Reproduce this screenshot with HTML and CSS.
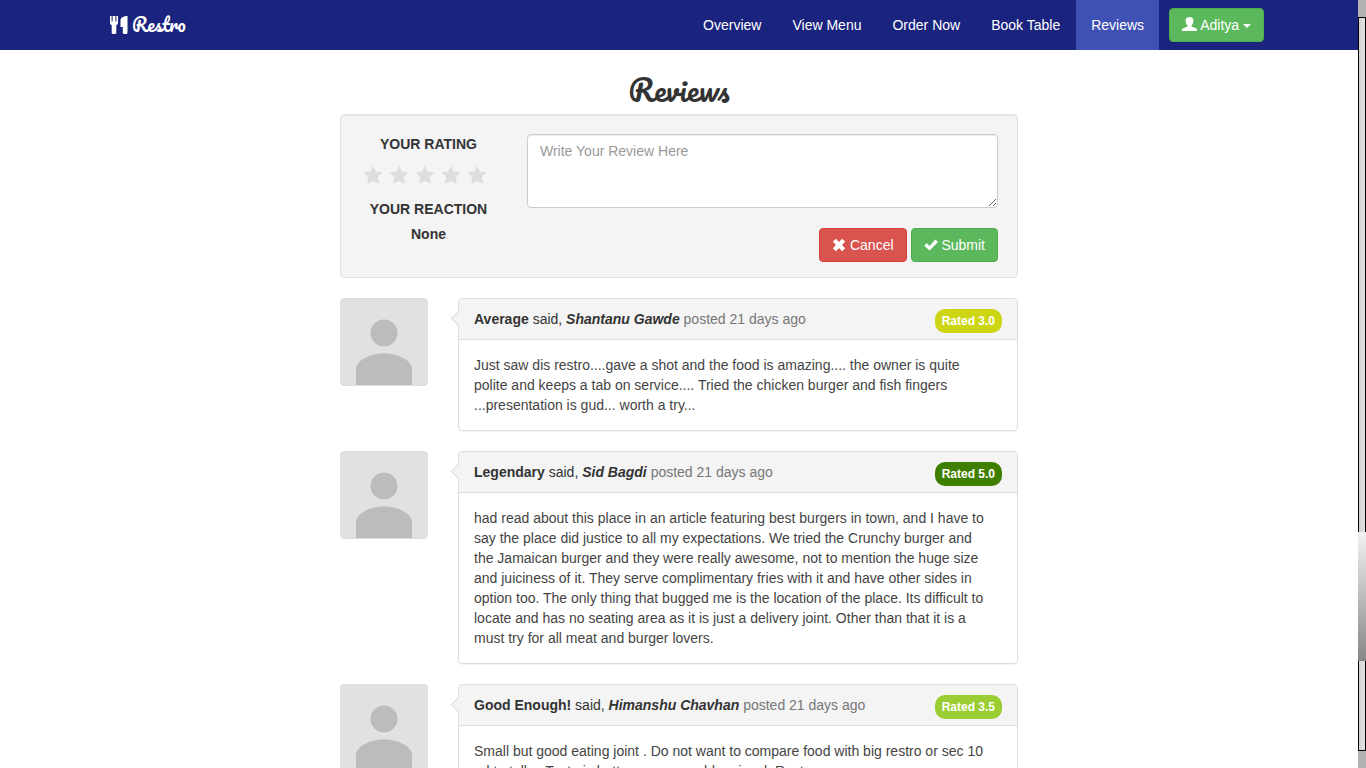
FILE: index.html
```html
<!DOCTYPE html>
<html lang="en">
<head>
<meta charset="utf-8">
<meta name="viewport" content="width=device-width, initial-scale=1">
<title>Restro - Reviews</title>
<link rel="stylesheet" href="styles.css">
</head>
<body>
<svg class="sprite" aria-hidden="true">
  <symbol id="star" viewBox="0 0 20 20"><path stroke="#ddd" stroke-width="1.200" stroke-linejoin="round" d="M10 2l2.500 5.100 5.700.8-4.200 4 1.200 5.900L10 15.200l-5.200 2.600L6 11.900l-4.200-4 5.700-.8z"/></symbol>
  <symbol id="person" viewBox="0 0 86 86"><circle cx="43" cy="34" r="13.500"/><path d="M15 86V70c0-8 13-15.500 28-15.500S71 62 71 70v16z"/></symbol>
</svg>
<div class="page">
  <header class="navbar">
    <div class="navbar-inner">
      <a class="brand" href="#">
        <svg class="brand-icon" viewBox="0 0 18 18" aria-hidden="true"><path d="M0 0h1.600v5.500h1V0H5.400v5.500h1V0H8v7c0 1.200-.8 1.800-1.700 2.200V17c0 1.300-4.600 1.300-4.600 0V9.200C.8 8.800 0 8.200 0 7zM17.500 0v17c0 1.300-4.700 1.300-4.700 0v-6h-2.300V4c0-2.400 3.500-4 7-4z"/></svg>
        <span class="script">Restro</span>
      </a>
      <nav class="nav">
        <a href="#">Overview</a>
        <a href="#">View Menu</a>
        <a href="#">Order Now</a>
        <a href="#">Book Table</a>
        <a href="#" class="active">Reviews</a>
        <button type="button" class="btn btn-success user">
          <svg class="icon" viewBox="0 0 15 14" aria-hidden="true"><path d="M7.500 0c2.400 0 3.900 1.300 3.900 3.600 0 1.900-.7 3.800-1.900 4.900v1.100l4.500 1.600c.6.300 1 .7 1 1.300V14H0v-1.500c0-.6.400-1 1-1.300l4.500-1.600V8.500C4.300 7.400 3.600 5.500 3.600 3.600 3.600 1.300 5.100 0 7.500 0z"/></svg>
          Aditya <span class="caret"></span>
        </button>
      </nav>
    </div>
  </header>
  <main class="content">
    <h1 class="script">Reviews</h1>
    <form class="well">
      <div class="rating">
        <strong>YOUR RATING</strong>
        <div class="stars">
          <button type="button" aria-label="1 star"><svg><use href="#star"/></svg></button>
          <button type="button" aria-label="2 stars"><svg><use href="#star"/></svg></button>
          <button type="button" aria-label="3 stars"><svg><use href="#star"/></svg></button>
          <button type="button" aria-label="4 stars"><svg><use href="#star"/></svg></button>
          <button type="button" aria-label="5 stars"><svg><use href="#star"/></svg></button>
        </div>
        <strong>YOUR REACTION</strong>
        <strong class="reaction">None</strong>
      </div>
      <div class="compose">
        <textarea aria-label="Review" placeholder="Write Your Review Here"></textarea>
        <div class="actions">
          <button type="button" class="btn btn-danger">
            <svg class="icon" viewBox="0 0 14 14" aria-hidden="true"><path d="M3.800.8L7 4l3.200-3.200 3 3L10 7l3.200 3.200-3 3L7 10l-3.200 3.200-3-3L4 7 .8 3.800z"/></svg>
            Cancel
          </button>
          <button type="submit" class="btn btn-success">
            <svg class="icon" viewBox="0 0 15 14" aria-hidden="true"><path d="M12.200 1.200L15 3.800 6 13 .2 7.900l2.600-2.700L6 8z"/></svg>
            Submit
          </button>
        </div>
      </div>
    </form>
    <article class="review">
      <svg class="avatar" viewBox="0 0 86 86" role="img" aria-label="User"><use href="#person"/></svg>
      <div class="panel">
        <div class="panel-heading">
          <p><strong>Average</strong> said, <strong><em>Shantanu Gawde</em></strong> <span class="muted">posted 21 days ago</span></p>
          <span class="label average">Rated 3.0</span>
        </div>
        <p class="panel-body">Just saw dis restro....gave a shot and the food is amazing.... the owner is quite<br>polite and keeps a tab on service.... Tried the chicken burger and fish fingers<br>...presentation is gud... worth a try...</p>
      </div>
    </article>
    <article class="review">
      <svg class="avatar" viewBox="0 0 86 86" role="img" aria-label="User"><use href="#person"/></svg>
      <div class="panel">
        <div class="panel-heading">
          <p><strong>Legendary</strong> said, <strong><em>Sid Bagdi</em></strong> <span class="muted">posted 21 days ago</span></p>
          <span class="label legendary">Rated 5.0</span>
        </div>
        <p class="panel-body">had read about this place in an article featuring best burgers in town, and I have to<br>say the place did justice to all my expectations. We tried the Crunchy burger and<br>the Jamaican burger and they were really awesome, not to mention the huge size<br>and juiciness of it. They serve complimentary fries with it and have other sides in<br>option too. The only thing that bugged me is the location of the place. Its difficult to<br>locate and has no seating area as it is just a delivery joint. Other than that it is a<br>must try for all meat and burger lovers.</p>
      </div>
    </article>
    <article class="review">
      <svg class="avatar" viewBox="0 0 86 86" role="img" aria-label="User"><use href="#person"/></svg>
      <div class="panel">
        <div class="panel-heading">
          <p><strong>Good Enough!</strong> said, <strong><em>Himanshu Chavhan</em></strong> <span class="muted">posted 21 days ago</span></p>
          <span class="label good">Rated 3.5</span>
        </div>
        <p class="panel-body">Small but good eating joint . Do not want to compare food with big restro or sec 10<br>ad to talks. Taste is better, name would varies. k Rest</p>
      </div>
    </article>
  </main>
</div>
<div class="scrollbar" aria-hidden="true"><div class="track"><div class="thumb"></div></div></div>
</body>
</html>
```

FILE: styles.css
```css
* { box-sizing: border-box; }
body {
  margin: 0;
  height: 100vh;
  display: flex;
  overflow: hidden;
  background: #fff;
  color: #333;
  font: 14px/20px "Liberation Sans", Arial, sans-serif;
}
p, h1 { margin: 0; }
.sprite { position: absolute; width: 0; height: 0; }
.page { flex: 1; min-width: 0; overflow: hidden; }
.script { font-family: Pacifico, cursive; font-weight: 400; }

.navbar { background: #1a237e; }
.navbar-inner {
  max-width: 1170px;
  height: 50px;
  margin: 0 auto;
  padding: 0 0 0 16px;
  display: flex;
  justify-content: space-between;
}
.brand {
  display: flex;
  align-items: center;
  gap: 4px;
  color: #fff;
  text-decoration: none;
  font-size: 18px;
}
.brand-icon { width: 18px; height: 18px; fill: #fff; }
.nav { display: flex; align-items: center; gap: 1px; }
.nav a {
  padding: 15px;
  color: #fff;
  text-decoration: none;
}
.nav .active { background: #3f51b5; }
.user { margin-left: 9px; }

.btn {
  height: 34px;
  padding: 0 12px;
  border: 1px solid;
  border-radius: 4px;
  color: #fff;
  font: inherit;
  white-space: nowrap;
}
.btn-success { background: #5cb85c; border-color: #4cae4c; }
.btn-danger { background: #d9534f; border-color: #d43f3a; }
.icon { width: 14px; height: 14px; fill: #fff; vertical-align: -2px; }
.user .icon { width: 15px; vertical-align: -1px; }
.caret {
  display: inline-block;
  border: 4px solid transparent;
  border-top-color: #fff;
  border-bottom: 0;
  vertical-align: middle;
}

.content { max-width: 710px; margin: 0 auto; padding: 20px 16px; }
h1 { font-size: 30px; line-height: 40px; text-align: center; margin-bottom: 4px; }
.well {
  display: flex;
  gap: 30px;
  padding: 19px;
  margin-bottom: 20px;
  background: #f4f4f4;
  border: 1px solid #e3e3e3;
  border-radius: 4px;
  box-shadow: inset 0 1px 1px rgba(0, 0, 0, .05);
}
.rating {
  width: 137px;
  display: flex;
  flex-direction: column;
  align-items: center;
}
.stars { display: flex; gap: 6px; margin: 11px 0 14px; padding-right: 8px; }
.stars button { padding: 0; border: 0; background: none; height: 20px; }
.stars svg { display: block; width: 20px; height: 20px; fill: #ddd; }
.reaction { margin-top: 5px; }
.compose { flex: 1; min-width: 0; margin-bottom: -4px; }
textarea {
  display: block;
  width: 100%;
  height: 74px;
  padding: 6px 12px;
  border: 1px solid #ccc;
  border-radius: 4px;
  box-shadow: inset 0 1px 1px rgba(0, 0, 0, .075);
  color: #555;
  font: inherit;
}
textarea::placeholder { color: #999; }
.actions { display: flex; justify-content: flex-end; gap: 4px; margin-top: 20px; }

.review { display: flex; gap: 30px; align-items: flex-start; margin-bottom: 20px; }
.avatar {
  flex: none;
  width: 88px;
  height: 88px;
  background: #e1e1e1;
  border: 1px solid #ddd;
  border-radius: 4px;
  fill: #bcbcbc;
}
.panel {
  position: relative;
  flex: 1;
  min-width: 0;
  border: 1px solid #ddd;
  border-radius: 4px;
  box-shadow: 0 1px 1px rgba(0, 0, 0, .05);
}
.panel::before {
  content: "";
  position: absolute;
  top: 14px;
  left: -6px;
  width: 10px;
  height: 10px;
  background: #f4f4f4;
  border: solid #ddd;
  border-width: 0 0 1px 1px;
  transform: rotate(45deg);
}
.panel-heading {
  position: relative;
  display: flex;
  justify-content: space-between;
  padding: 10px 15px;
  background: #f4f4f4;
  border-bottom: 1px solid #ddd;
  border-radius: 3px 3px 0 0;
}
.muted { color: #777; }
.label {
  padding: 2px 7px;
  margin-bottom: -4px;
  border-radius: 10px;
  color: #fff;
  font-size: 12px;
  font-weight: 700;
}
.average { background: #cdd614; }
.legendary { background: #3f7f00; }
.good { background: #9acd32; }
.panel-body { padding: 15px; color: #444; }

.scrollbar { width: 8px; padding: 17px 0; background: #b2b2b2; }
.track {
  height: 100%;
  display: flex;
  flex-direction: column;
  border: 1px solid #000;
  background: linear-gradient(90deg, #d4d2d2, #e4e2e2);
}
.thumb {
  width: 8px;
  height: 129px;
  margin: auto -1px 89px;
  background: linear-gradient(#f2f2f2, #858585);
}
```
